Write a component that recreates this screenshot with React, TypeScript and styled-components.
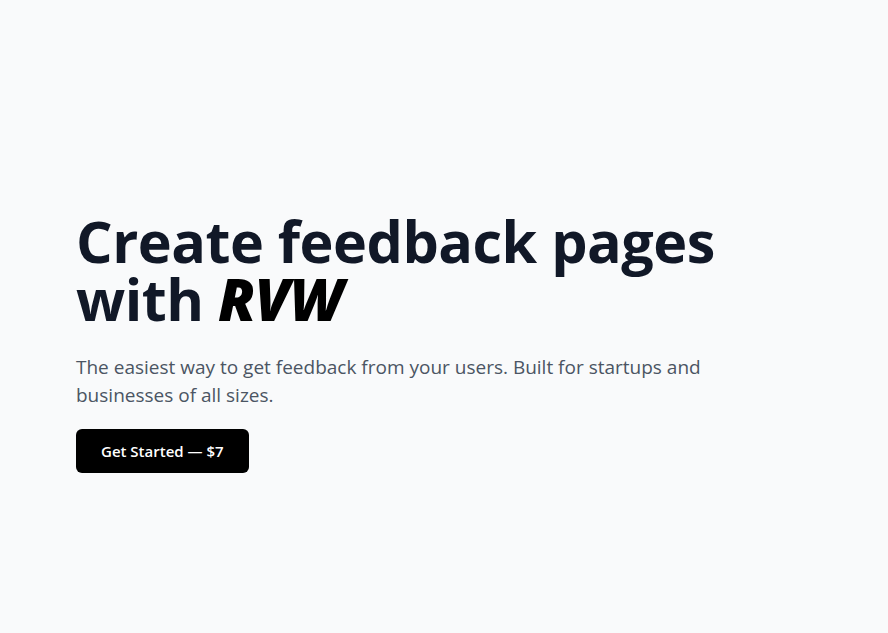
import React from 'react';
import styled, { createGlobalStyle } from 'styled-components';

const GlobalStyle = createGlobalStyle`
  * {
    box-sizing: border-box;
  }

  body {
    margin: 0;
    background: #f9fafb;
    font-family: 'Open Sans', 'Noto Sans', sans-serif;
  }
`;

const Page = styled.main`
  min-height: 633px;
  padding: 212px 76px 0 76px;
`;

const Hero = styled.section`
  max-width: 720px;
`;

const Title = styled.h1`
  margin: 0;
  font-size: 57.5px;
  line-height: 58px;
  font-weight: 700;
  color: #111827;
  letter-spacing: -0.5px;
`;

const Brand = styled.em`
  font-style: italic;
  font-weight: 800;
  color: #000;
  padding-right: 4px;
`;

const Lead = styled.p`
  margin: 25px 0 0 0;
  max-width: 640px;
  font-size: 19px;
  line-height: 28px;
  color: #4b5563;
`;

const CtaButton = styled.button`
  margin-top: 20px;
  background: #000;
  color: #fff;
  border: none;
  border-radius: 6px;
  padding: 12px 25px;
  font-family: inherit;
  font-size: 15px;
  line-height: 20px;
  font-weight: 600;
  cursor: pointer;

  &:hover {
    background: #1f2937;
  }
`;

const App = () => {
  return (
    <>
      <GlobalStyle />
      <Page>
        <Hero>
          <Title>
            Create feedback pages with <Brand>RVW</Brand>
          </Title>
          <Lead>
            The easiest way to get feedback from your users. Built for startups and
            businesses of all sizes.
          </Lead>
          <CtaButton>Get Started — $7</CtaButton>
        </Hero>
      </Page>
    </>
  );
};

export default App;
